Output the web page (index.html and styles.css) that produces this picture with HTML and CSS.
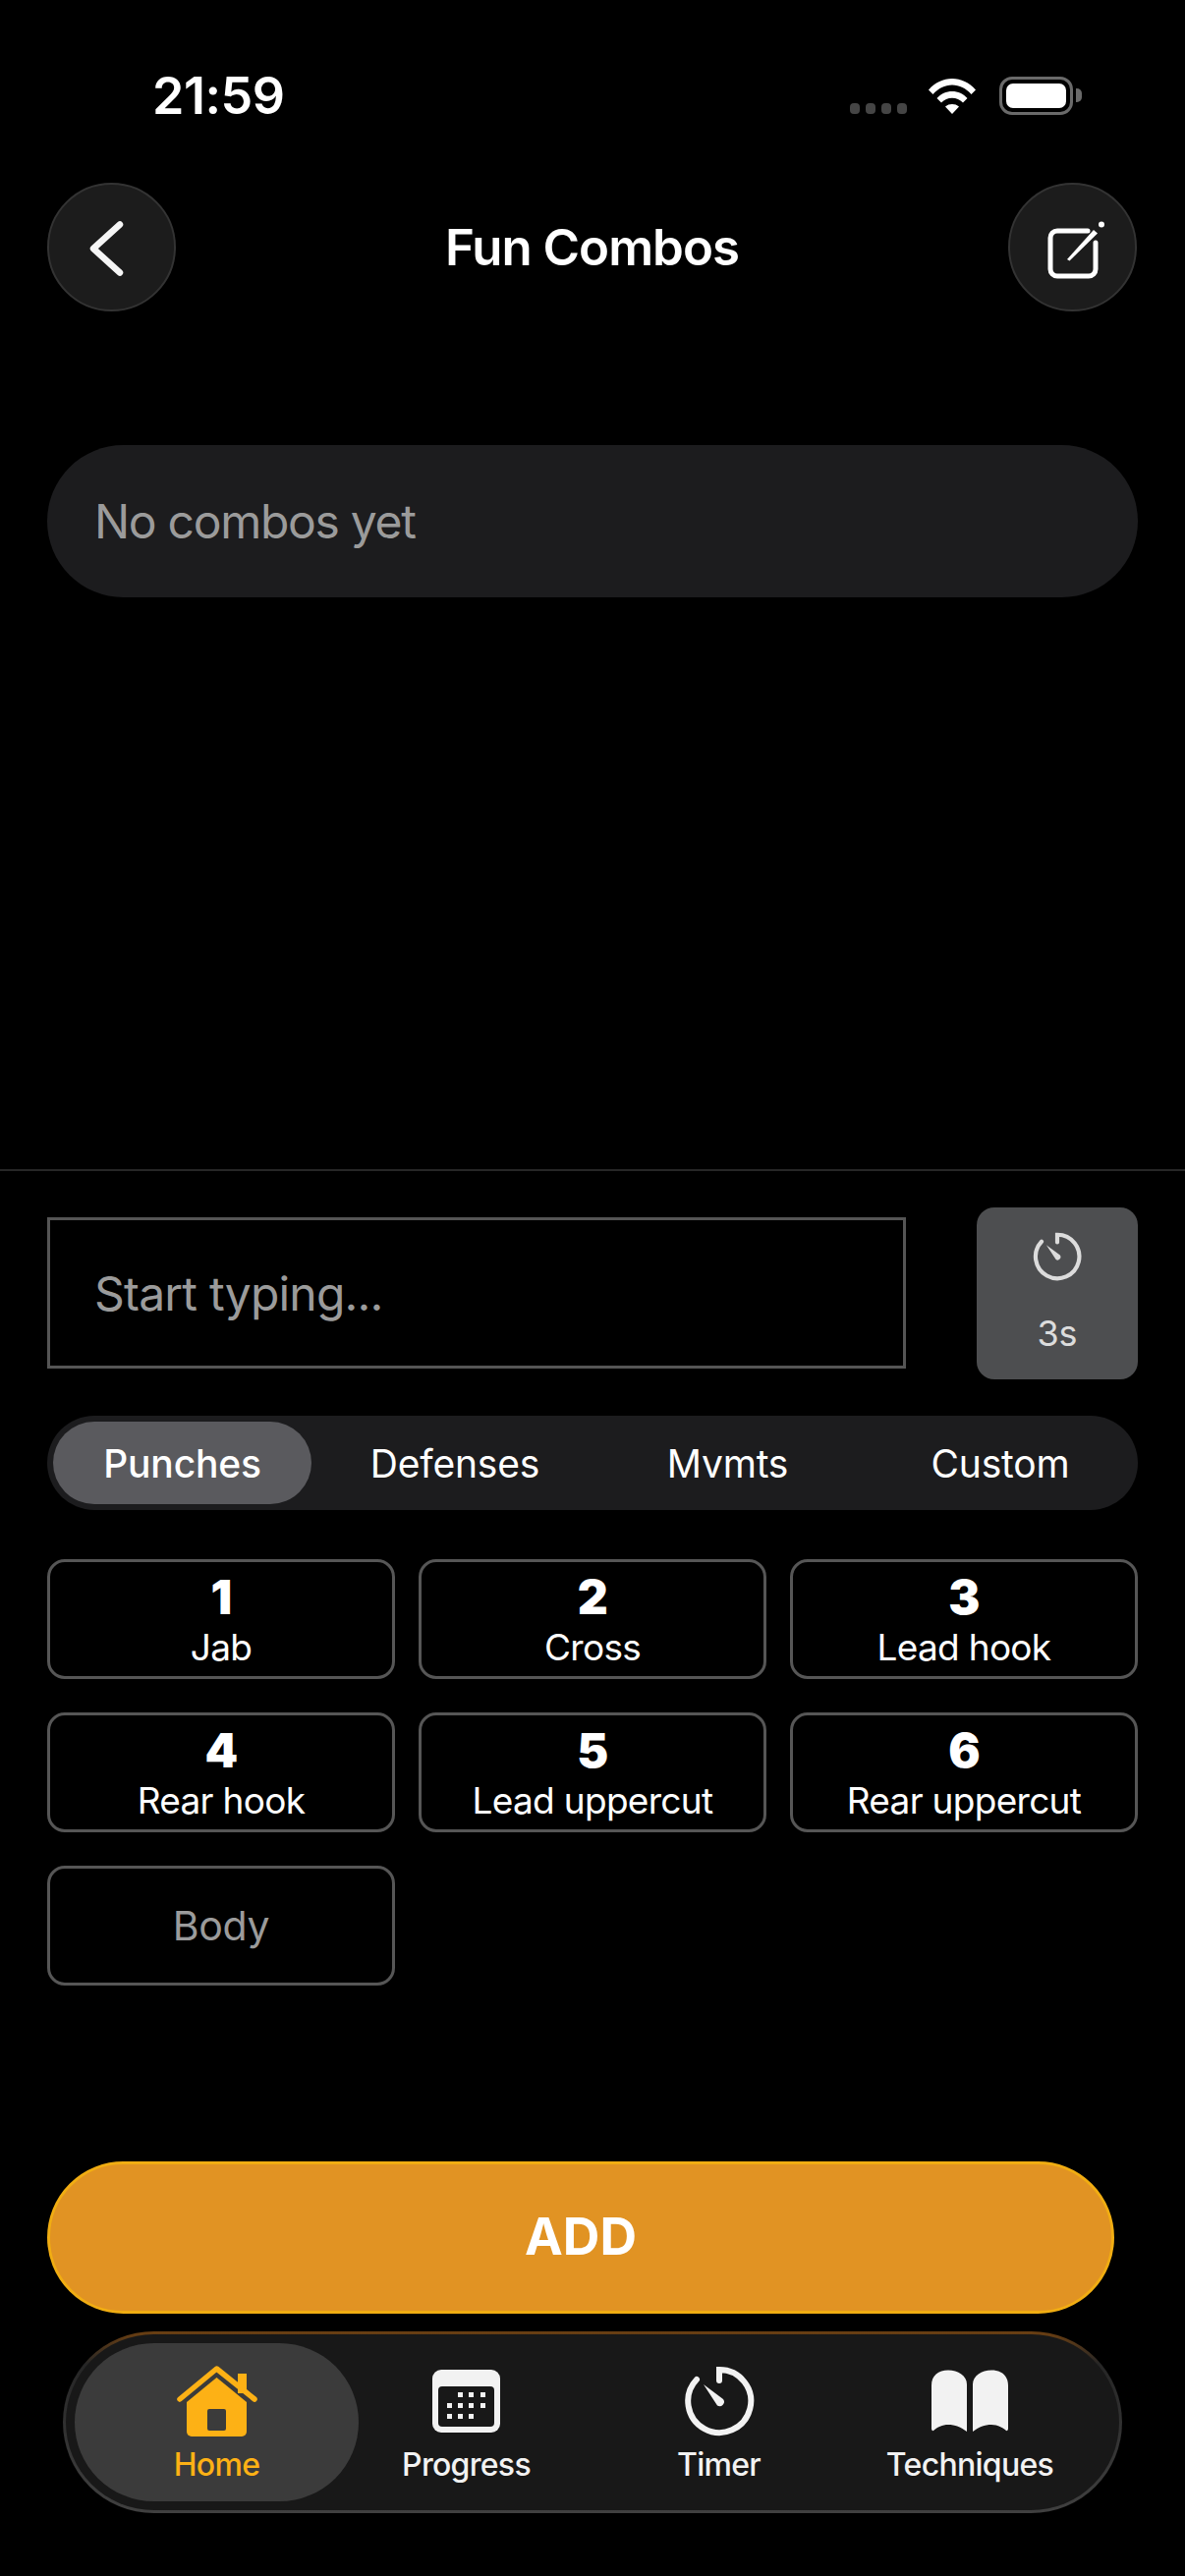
FILE: index.html
```html
<!DOCTYPE html>
<html lang="en">
<head>
    <meta charset="UTF-8">
    <meta name="viewport" content="width=device-width, initial-scale=1.0">
    <title>Fun Combos</title>
    <link rel="stylesheet" href="styles.css">
</head>
<body>
    <div class="status">
        <span class="time">21:59</span>
        <div class="status-icons">
            <div class="signal"><i></i><i></i><i></i><i></i></div>
            <svg class="wifi" viewBox="0 0 50 38" width="50" height="38">
                <path d="M1 12.500C7.500 5 16 1 25 1s17.500 4 24 11.500l-4.500 4.500C39 11 32.500 7.500 25 7.500S11 11 5.500 17z" fill="#fff"/>
                <path d="M9.500 21C13.500 16.500 19 14 25 14s11.500 2.500 15.500 7L36 25.500c-3-3-6.800-4.700-11-4.700s-8 1.700-11 4.700z" fill="#fff"/>
                <path d="M18 29.500c2-1.700 4.400-2.500 7-2.500s5 .8 7 2.500L25 37z" fill="#fff"/>
            </svg>
            <div class="battery"><div class="battery-fill"></div></div>
        </div>
    </div>

    <div class="header">
        <button class="round-btn">
            <svg viewBox="0 0 60 60" width="60" height="60">
                <path d="M38 6.500 11 31l27 24.500" fill="none" stroke="#f5f5f5" stroke-width="6.500" stroke-linecap="round" stroke-linejoin="round"/>
            </svg>
        </button>
        <h1 class="title">Fun Combos</h1>
        <button class="round-btn">
            <svg class="edit-icon" viewBox="0 -3 60 60" width="60" height="60">
                <path d="M45 10H14a7 7 0 0 0-7 7v32a7 7 0 0 0 7 7h32a7 7 0 0 0 7-7V22" fill="none" stroke="#fff" stroke-width="5" stroke-linecap="round"/>
                <path d="M24 39 51 9l4 3.500-28.500 28z" fill="#fff"/>
                <circle cx="59" cy="3.500" r="3" fill="#fff"/>
            </svg>
        </button>
    </div>

    <div class="list">
        <div class="empty-pill">No combos yet</div>
    </div>

    <div class="composer">
        <div class="input-row">
            <div class="combo-input">Start typing...</div>
            <button class="delay-btn">
                <svg viewBox="0 0 72 72" width="50" height="50">
                    <path d="M36 15V4a32 32 0 1 1-23 10" fill="none" stroke="#dcdcdc" stroke-width="6" stroke-linecap="round"/>
                    <path d="M20 19 40 34a4.500 4.500 0 0 1-6 6.500z" fill="#dcdcdc"/>
                </svg>
                <span>3s</span>
            </button>
        </div>

        <div class="tabs">
            <button class="tab active">Punches</button>
            <button class="tab">Defenses</button>
            <button class="tab">Mvmts</button>
            <button class="tab">Custom</button>
        </div>

        <div class="moves">
            <button class="move"><b>1</b><span>Jab</span></button>
            <button class="move"><b>2</b><span>Cross</span></button>
            <button class="move"><b>3</b><span>Lead hook</span></button>
            <button class="move"><b>4</b><span>Rear hook</span></button>
            <button class="move"><b>5</b><span>Lead uppercut</span></button>
            <button class="move"><b>6</b><span>Rear uppercut</span></button>
            <button class="move muted"><span>Body</span></button>
        </div>

        <button class="add-btn">ADD</button>
    </div>

    <nav class="nav">
        <a class="nav-item active">
            <svg viewBox="0 0 82 72" width="82" height="72">
                <path d="M10 37 40.500 12 71 37v30a5 5 0 0 1-5 5H15a5 5 0 0 1-5-5z" fill="#fdb115"/>
                <rect x="31" y="44" width="19" height="22" rx="2" fill="#3b3b3b"/>
                <path d="M62 8h9v20h-9z" fill="#fdb115"/>
                <path d="M3 34 40.500 3 79 34" fill="none" stroke="#fdb115" stroke-width="5.500" stroke-linecap="round" stroke-linejoin="round"/>
            </svg>
            <span>Home</span>
        </a>
        <a class="nav-item">
            <svg viewBox="0 0 69 72" width="69" height="72">
                <rect x="0" y="4" width="69" height="64" rx="9" fill="#f2f2f2"/>
                <rect x="6" y="21" width="57" height="41" rx="4" fill="#181818"/>
                <g fill="#f2f2f2">
                    <rect x="26" y="27" width="5" height="5"/><rect x="37" y="27" width="5" height="5"/><rect x="49" y="27" width="5" height="5"/>
                    <rect x="15" y="38" width="5" height="5"/><rect x="26" y="38" width="5" height="5"/><rect x="37" y="38" width="5" height="5"/><rect x="49" y="38" width="5" height="5"/>
                    <rect x="15" y="49" width="5" height="5"/><rect x="26" y="49" width="5" height="5"/><rect x="37" y="49" width="5" height="5"/>
                </g>
            </svg>
            <span>Progress</span>
        </a>
        <a class="nav-item">
            <svg viewBox="0 0 72 72" width="72" height="72">
                <path d="M36 15V4a32 32 0 1 1-23 10" fill="none" stroke="#f2f2f2" stroke-width="6" stroke-linecap="round"/>
                <path d="M20 19 40 34a4.500 4.500 0 0 1-6 6.500z" fill="#f2f2f2"/>
            </svg>
            <span>Timer</span>
        </a>
        <a class="nav-item">
            <svg viewBox="0 0 80 72" width="80" height="72">
                <path d="M1 20C1 10 8 4.500 18 4.500S37 10 37 19v48c-6-4.500-12-7-19-7-6 0-11 2.500-15 6-1 .5-2-.5-2-2z" fill="#f2f2f2"/>
                <path d="M79 20C79 10 72 4.500 62 4.500S43 10 43 19v48c6-4.500 12-7 19-7 6 0 11 2.500 15 6 1 .5 2-.5 2-2z" fill="#f2f2f2"/>
            </svg>
            <span>Techniques</span>
        </a>
    </nav>
</body>
</html>
```

FILE: styles.css
```css
* {
    box-sizing: border-box;
}
body {
    width: 1206px;
    height: 2622px;
    margin: 0;
    overflow: hidden;
    background: #000;
    color: #fff;
    font-family: 'Inter', 'Liberation Sans', sans-serif;
}
button {
    font: inherit;
    color: inherit;
    background: none;
    border: none;
    padding: 0;
}
.status {
    display: flex;
    justify-content: space-between;
    align-items: flex-start;
    height: 186px;
    padding: 70px 114px 0 155px;
}
.time {
    font-size: 52px;
    font-weight: 600;
    line-height: 56px;
    letter-spacing: -0.5px;
}
.status-icons {
    display: flex;
    align-items: flex-end;
    margin-top: 8px;
}
.signal {
    display: flex;
    gap: 6px;
    margin: 0 21px 1px 1px;
}
.signal i {
    width: 10px;
    height: 11px;
    border-radius: 4px;
    background: #454545;
}
.wifi {
    display: block;
    margin-right: 23px;
}
.battery {
    position: relative;
    width: 75px;
    height: 39px;
    padding: 4px;
    border: 3px solid #6a6a6a;
    border-radius: 13px;
}
.battery::after {
    content: "";
    position: absolute;
    top: 9px;
    right: -12px;
    width: 6px;
    height: 14px;
    border-radius: 0 5px 5px 0;
    background: #6a6a6a;
}
.battery-fill {
    height: 100%;
    border-radius: 7px;
    background: #fff;
}
.header {
    display: flex;
    justify-content: space-between;
    align-items: center;
    height: 131px;
    margin: 0 49px 0 48px;
}
.title {
    margin: 0;
    font-size: 51px;
    font-weight: 600;
    letter-spacing: -1px;
}
.round-btn {
    display: flex;
    align-items: center;
    justify-content: center;
    width: 131px;
    height: 131px;
    border: 2px solid #333;
    border-radius: 50%;
    background: #1c1c1c;
}
.edit-icon {
    overflow: visible;
}
.list {
    height: 873px;
    padding: 136px 48px 0;
}
.empty-pill {
    display: flex;
    align-items: center;
    height: 155px;
    padding-left: 48px;
    border-radius: 78px;
    background: #1c1c1e;
    color: #9b9b9b;
    font-size: 48px;
    letter-spacing: -1.300px;
}
.composer {
    padding: 37px 48px 0;
    border-top: 2px solid #262626;
}
.input-row {
    display: flex;
    justify-content: space-between;
    align-items: flex-start;
}
.combo-input {
    display: flex;
    align-items: center;
    width: 874px;
    height: 154px;
    margin-top: 10px;
    padding-left: 45px;
    border: 3px solid #555;
    color: #9b9b9b;
    font-size: 48px;
    letter-spacing: -0.8px;
}
.delay-btn {
    display: flex;
    flex-direction: column;
    align-items: center;
    width: 164px;
    height: 175px;
    padding-top: 25px;
    border-radius: 18px;
    background: #4d4e50;
    color: #dcdcdc;
    font-size: 36px;
}
.delay-btn span {
    margin-top: 31px;
}
.tabs {
    display: grid;
    grid-template-columns: repeat(4, 263px);
    gap: 14.500px;
    height: 96px;
    margin-top: 37px;
    padding: 6px;
    border-radius: 48px;
    background: #1c1c1e;
}
.tab {
    border-radius: 42px;
    font-size: 39px;
    letter-spacing: -0.2px;
}
.tab.active {
    background: #5a5a5e;
    font-weight: 500;
}
.moves {
    display: grid;
    grid-template-columns: repeat(3, 354px);
    grid-auto-rows: 122px;
    gap: 34px 24px;
    margin-top: 50px;
}
.move {
    display: flex;
    flex-direction: column;
    align-items: center;
    justify-content: center;
    padding-top: 4px;
    border: 3px solid #565656;
    border-radius: 18px;
    font-size: 37px;
    letter-spacing: -0.7px;
}
.move b {
    font-size: 48px;
    font-weight: 900;
    line-height: 50px;
}
.move span {
    margin-top: 4px;
    line-height: 44px;
}
.move.muted {
    padding-top: 0;
    color: #9b9b9b;
    font-size: 41px;
    letter-spacing: -0.3px;
}
.move.muted span {
    margin-top: 0;
}
.add-btn {
    display: block;
    width: 1086px;
    height: 155px;
    margin-top: 179px;
    padding-bottom: 2px;
    border: 3px solid #f1ad12;
    border-radius: 78px;
    background: #e19323;
    font-size: 52px;
    font-weight: 700;
}
.nav {
    display: grid;
    grid-template-columns: 289px 219px 295px 216px;
    width: 1078px;
    height: 185px;
    margin: 18px 0 0 64px;
    padding: 9px;
    border: 3px solid transparent;
    border-radius: 93px;
    background: linear-gradient(#181818, #181818) padding-box,
                linear-gradient(#6b3f12, #262626 18%, #404040) border-box;
}
.nav-item {
    display: flex;
    flex-direction: column;
    align-items: center;
    padding-top: 23px;
    border-radius: 81px;
    font-size: 32px;
    font-weight: 500;
    letter-spacing: -0.7px;
    color: #f2f2f2;
}
.nav-item span {
    margin-top: 9px;
}
.nav-item.active {
    background: #3b3b3b;
    color: #fdb115;
}
```
